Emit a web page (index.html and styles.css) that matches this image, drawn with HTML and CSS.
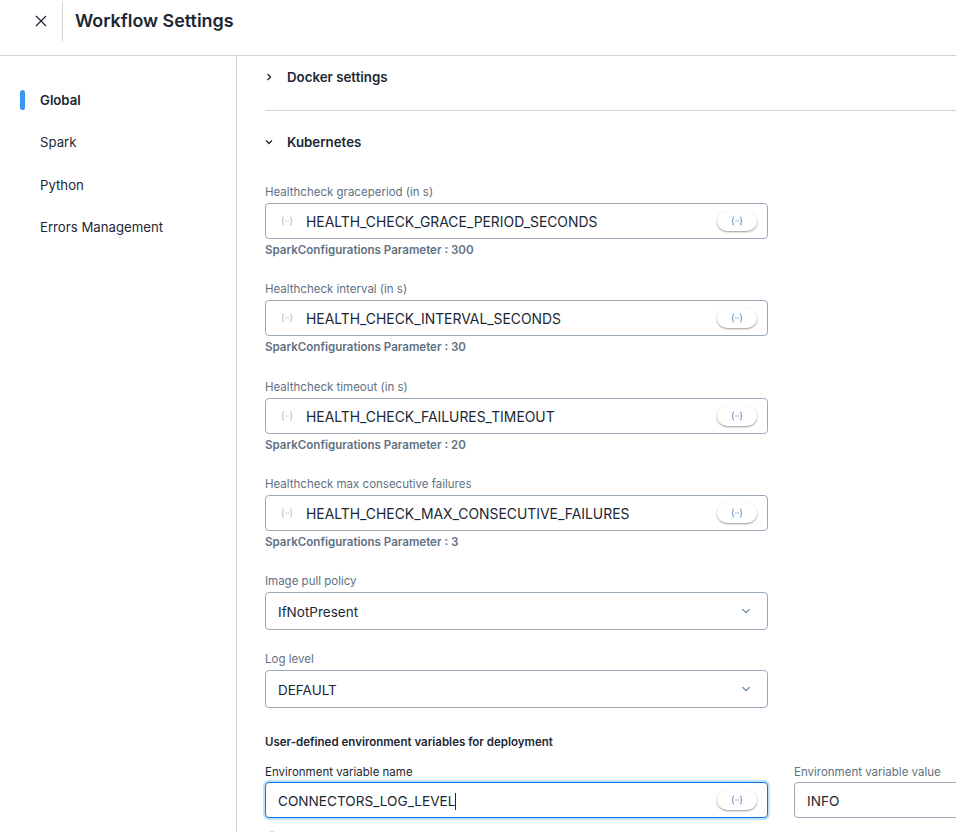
FILE: index.html
```html
<!DOCTYPE html>
<html lang="en">
<head>
    <meta charset="UTF-8">
    <meta name="viewport" content="width=device-width, initial-scale=1.0">
    <title>Workflow Settings</title>
    <link rel="stylesheet" href="styles.css">
</head>
<body>
    <svg class="icon-defs">
        <symbol id="var" viewBox="0 0 12 10">
            <path d="M3 .8C1.9.8 2 1.6 2 2.6c0 1.2-.2 2-1 2.4.8.4 1 1.2 1 2.4 0 1-.1 1.8 1 1.8M9 .8c1.1 0 1 .8 1 1.8 0 1.2.2 2 1 2.4-.8.4-1 1.2-1 2.4 0 1 .1 1.8-1 1.8"/>
            <path class="dash" d="M4.4 5h1.2M6.6 5h1.2"/>
        </symbol>
    </svg>

    <header class="topbar">
        <div class="close-box">
            <svg class="close-icon" viewBox="0 0 12 12"><path d="M1 1l10 10M11 1L1 11"/></svg>
        </div>
        <h1>Workflow Settings</h1>
    </header>

    <div class="page">
        <nav class="sidebar">
            <a class="nav-item active">Global</a>
            <a class="nav-item">Spark</a>
            <a class="nav-item">Python</a>
            <a class="nav-item">Errors Management</a>
        </nav>

        <main class="content">
            <div class="section-head docker">
                <svg class="section-chevron" viewBox="0 0 8 8"><path d="M2.5 1l3 3-3 3"/></svg>
                <span>Docker settings</span>
            </div>
            <div class="divider"></div>
            <div class="section-head kube">
                <svg class="section-chevron" viewBox="0 0 8 8"><path d="M1 2.5l3 3 3-3"/></svg>
                <span>Kubernetes</span>
            </div>

            <div class="field">
                <label>Healthcheck graceperiod (in s)</label>
                <div class="input">
                    <span class="var-icon"><svg><use href="#var"/></svg></span>
                    <span class="value">HEALTH_CHECK_GRACE_PERIOD_SECONDS</span>
                    <span class="var-btn"><svg><use href="#var"/></svg></span>
                </div>
                <p class="hint">SparkConfigurations Parameter : 300</p>
            </div>

            <div class="field">
                <label>Healthcheck interval (in s)</label>
                <div class="input">
                    <span class="var-icon"><svg><use href="#var"/></svg></span>
                    <span class="value">HEALTH_CHECK_INTERVAL_SECONDS</span>
                    <span class="var-btn"><svg><use href="#var"/></svg></span>
                </div>
                <p class="hint">SparkConfigurations Parameter : 30</p>
            </div>

            <div class="field">
                <label>Healthcheck timeout (in s)</label>
                <div class="input">
                    <span class="var-icon"><svg><use href="#var"/></svg></span>
                    <span class="value">HEALTH_CHECK_FAILURES_TIMEOUT</span>
                    <span class="var-btn"><svg><use href="#var"/></svg></span>
                </div>
                <p class="hint">SparkConfigurations Parameter : 20</p>
            </div>

            <div class="field">
                <label>Healthcheck max consecutive failures</label>
                <div class="input">
                    <span class="var-icon"><svg><use href="#var"/></svg></span>
                    <span class="value">HEALTH_CHECK_MAX_CONSECUTIVE_FAILURES</span>
                    <span class="var-btn"><svg><use href="#var"/></svg></span>
                </div>
                <p class="hint">SparkConfigurations Parameter : 3</p>
            </div>

            <div class="field select-field">
                <label>Image pull policy</label>
                <div class="select">
                    <span class="select-value">IfNotPresent</span>
                    <svg class="select-chevron" viewBox="0 0 10 10"><path d="M1.5 3.2L5 6.7l3.5-3.5"/></svg>
                </div>
            </div>

            <div class="field select-field">
                <label>Log level</label>
                <div class="select">
                    <span class="select-value">DEFAULT</span>
                    <svg class="select-chevron" viewBox="0 0 10 10"><path d="M1.5 3.2L5 6.7l3.5-3.5"/></svg>
                </div>
            </div>

            <h3 class="env-title">User-defined environment variables for deployment</h3>

            <div class="env-row">
                <div class="env-col">
                    <label class="dark">Environment variable name</label>
                    <div class="input focused">
                        <span class="value no-icon">CONNECTORS_LOG_LEVEL<i class="caret"></i></span>
                        <span class="var-btn"><svg><use href="#var"/></svg></span>
                    </div>
                    <div class="env-help"></div>
                </div>
                <div class="env-col">
                    <label>Environment variable value</label>
                    <div class="input">
                        <span class="value no-icon">INFO</span>
                    </div>
                </div>
            </div>
        </main>
    </div>
</body>
</html>
```

FILE: styles.css
```css
body {
    font-family: Inter, "Noto Sans", sans-serif;
    background-color: #fff;
    color: #1c2733;
    margin: 0;
    padding: 0;
    height: 832px;
    overflow: hidden;
}

.icon-defs {
    display: block;
    width: 0;
    height: 0;
}

.topbar {
    display: flex;
    align-items: flex-start;
    height: 55px;
    border-bottom: 1px solid #cbd5e0;
}

.close-box {
    display: flex;
    align-items: center;
    padding-left: 35px;
    width: 27px;
    height: 40px;
    margin-top: 1px;
    border-right: 1px solid #cbd5e0;
}

.close-icon {
    width: 12px;
    height: 12px;
    fill: none;
    stroke: #1c2733;
    stroke-width: 1.2;
}

h1 {
    margin: 9px 0 0 12px;
    font-size: 17.9px;
    line-height: 24px;
    font-weight: 600;
}

.page {
    display: flex;
    height: 776px;
}

.sidebar {
    flex: none;
    display: flex;
    flex-direction: column;
    width: 236px;
    padding-top: 34px;
    border-right: 1px solid #cbd5e0;
}

.nav-item {
    position: relative;
    height: 20px;
    line-height: 20px;
    margin-bottom: 22.4px;
    padding-left: 40px;
    font-size: 13.2px;
}

.nav-item.active {
    font-weight: 600;
}

.nav-item.active::before {
    content: "";
    position: absolute;
    left: 20px;
    top: 0;
    width: 5px;
    height: 20px;
    border-radius: 3px;
    background-color: #3b96f3;
}

.content {
    flex: 1;
    min-width: 0;
    overflow: hidden;
    padding-left: 28px;
}

.section-head {
    display: flex;
    align-items: center;
    height: 20px;
    font-size: 13.3px;
    font-weight: 600;
}

.section-head.docker {
    margin-top: 11px;
}

.section-head.kube {
    margin-bottom: 31px;
}

.section-chevron {
    width: 8px;
    height: 8px;
    margin-right: 14px;
    fill: none;
    stroke: #1c2733;
    stroke-width: 1.3;
}

.divider {
    height: 1px;
    width: 800px;
    margin: 23px 0 21px;
    background-color: #cbd5e0;
}

.field {
    width: 503px;
    margin-bottom: 22.3px;
}

label {
    display: block;
    height: 16px;
    line-height: 18px;
    margin-bottom: 4px;
    font-size: 11.5px;
    color: #5f7183;
    white-space: nowrap;
}

label.dark {
    color: #1c2733;
}

.input {
    display: flex;
    align-items: center;
    height: 36px;
    box-sizing: border-box;
    border: 1px solid #9aa9b8;
    border-radius: 4px;
    background-color: #fff;
    font-size: 13.9px;
}

.input.focused {
    border-color: #0a78e0;
    box-shadow: 0 0 0 2px #bfe0fb;
}

.var-icon {
    display: flex;
    justify-content: center;
    width: 40px;
    flex: none;
    padding-left: 2px;
    box-sizing: border-box;
}

.var-icon svg,
.var-btn svg {
    width: 12px;
    height: 10px;
    fill: none;
    stroke-width: 1;
}

.var-icon svg {
    stroke: #a9bccd;
}

.value {
    flex: 1;
    padding-top: 2px;
    white-space: nowrap;
}

.value.no-icon {
    padding-left: 12px;
    font-size: 13.6px;
}

.caret {
    display: inline-block;
    width: 1px;
    height: 17px;
    vertical-align: -4px;
    background-color: #1c2733;
}

.var-btn {
    display: flex;
    align-items: center;
    justify-content: center;
    flex: none;
    width: 40px;
    height: 20px;
    margin-right: 10px;
    border-radius: 10px;
    background-color: #fff;
    box-shadow: 0 1px 2px rgba(0, 0, 0, 0.4);
}

.var-btn svg {
    stroke: #5a8fc0;
}

.hint {
    height: 16px;
    line-height: 17px;
    margin: 3px 0 0;
    font-size: 11.55px;
    font-weight: 600;
    color: #5f7183;
}

.select-field {
    margin-bottom: 20px;
}

.select {
    display: flex;
    align-items: center;
    justify-content: space-between;
    height: 38px;
    box-sizing: border-box;
    padding: 0 16px 0 12px;
    border: 1px solid #9aa9b8;
    border-radius: 4px;
    font-size: 13.5px;
}

.select-value {
    padding-top: 1px;
}

.select-chevron {
    width: 10px;
    height: 10px;
    fill: none;
    stroke: #5f7f9f;
    stroke-width: 1.2;
}

.env-title {
    height: 16px;
    line-height: 16px;
    margin: 26px 0 13px;
    font-size: 11.5px;
    font-weight: 600;
}

.env-row {
    display: flex;
    gap: 26px;
    width: 1032px;
}

.env-col {
    flex: none;
    width: 503px;
}

.env-col label {
    margin-bottom: 3px;
}

.env-help {
    width: 10px;
    height: 10px;
    margin: 13px 0 0 2px;
    border-radius: 50%;
    background-color: #bfe0fb;
}
```
